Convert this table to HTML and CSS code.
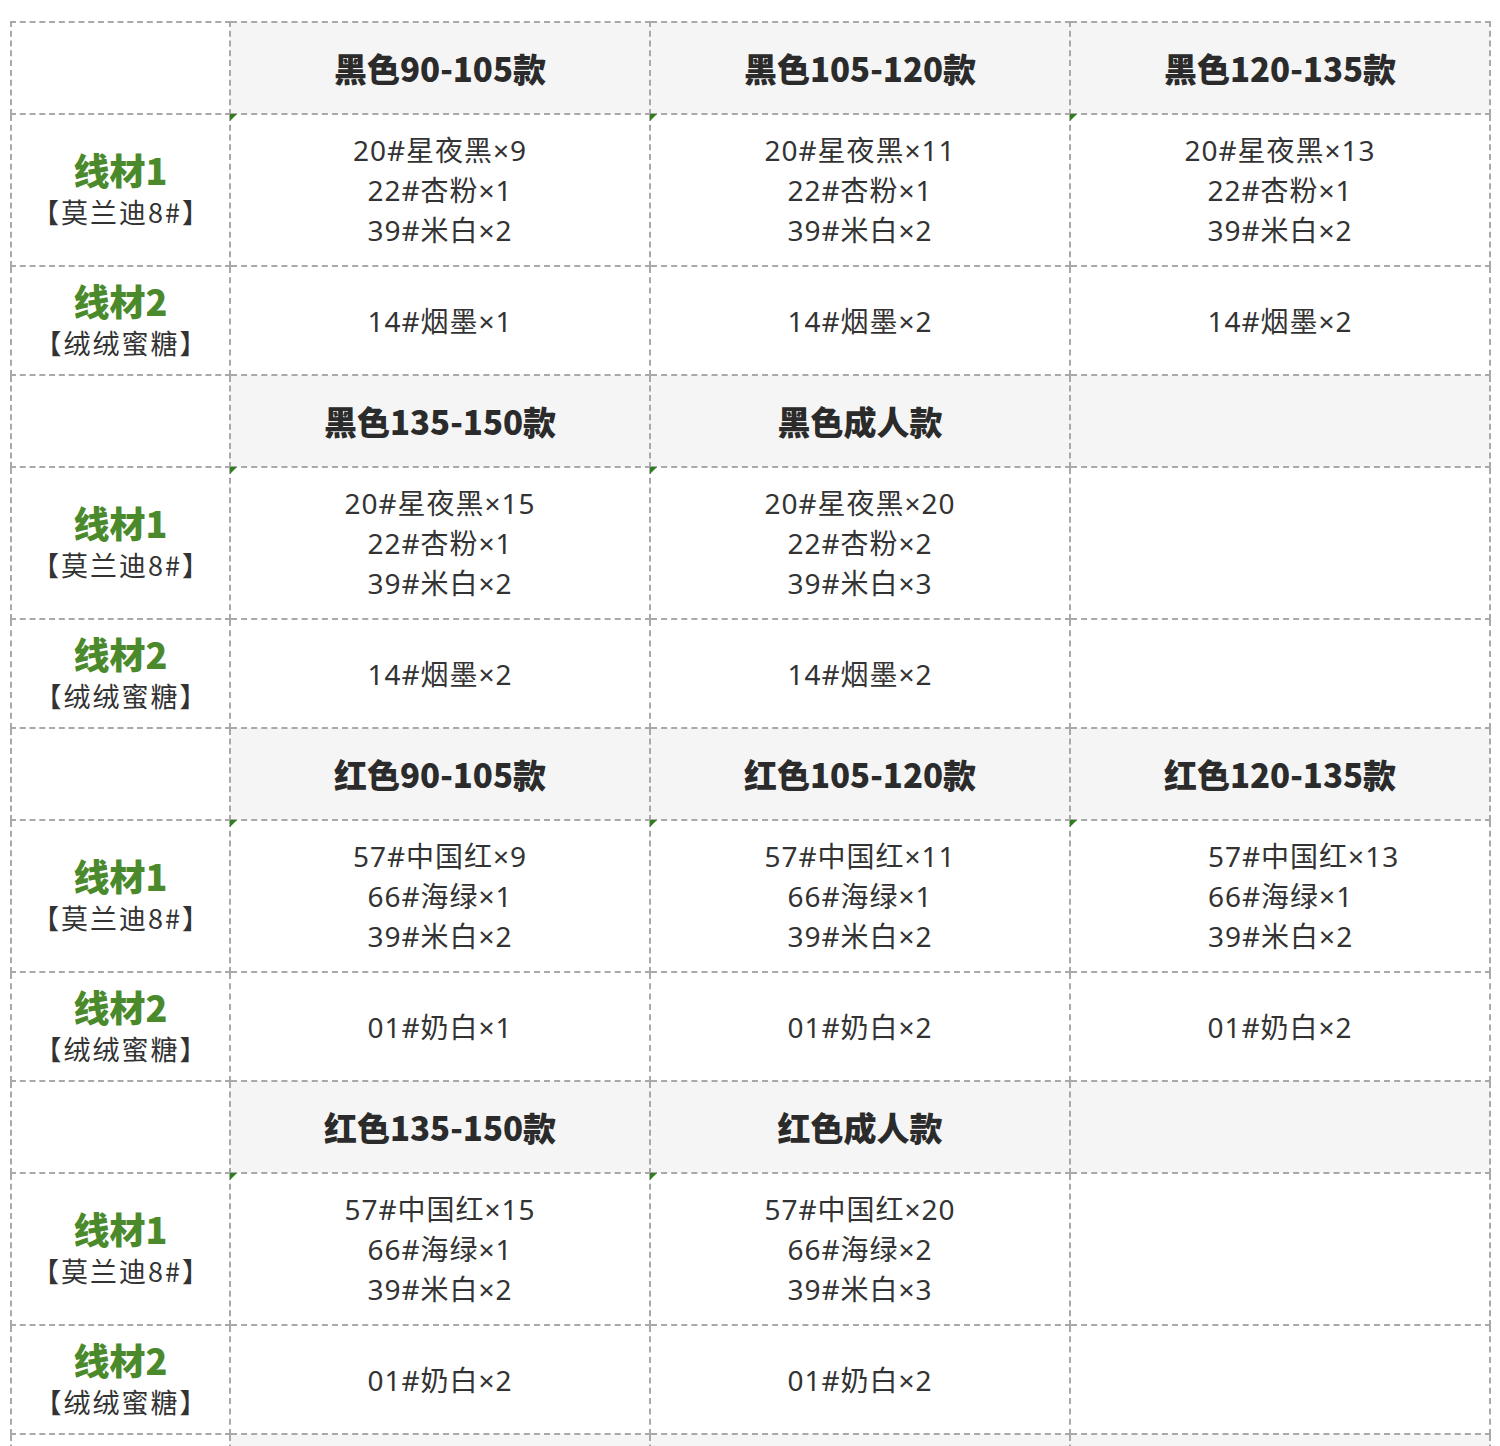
FILE: index.html
```html
<!DOCTYPE html>
<html lang="zh">
<head>
<meta charset="utf-8">
<title>线材表</title>
<link rel="stylesheet" href="styles.css">
</head>
<body>
<table class="grid">
  <colgroup><col class="c-label"><col class="c-data"><col class="c-data"><col class="c-data"></colgroup>
  <tbody>
    <tr class="r-head"><td class="blank"></td><td class="head">黑色90-105款</td><td class="head">黑色105-120款</td><td class="head">黑色120-135款</td></tr>
    <tr class="r-one">
      <td class="label"><div class="lab-main">线材1</div><div class="lab-sub">【莫兰迪8#】</div></td>
      <td class="data mark">20#星夜黑×9<br>22#杏粉×1<br>39#米白×2</td>
      <td class="data mark">20#星夜黑×11<br>22#杏粉×1<br>39#米白×2</td>
      <td class="data mark">20#星夜黑×13<br>22#杏粉×1<br>39#米白×2</td>
    </tr>
    <tr class="r-two">
      <td class="label"><div class="lab-main">线材2</div><div class="lab-sub">【绒绒蜜糖】</div></td>
      <td class="data">14#烟墨×1</td><td class="data">14#烟墨×2</td><td class="data">14#烟墨×2</td>
    </tr>

    <tr class="r-head"><td class="blank"></td><td class="head">黑色135-150款</td><td class="head">黑色成人款</td><td class="head"></td></tr>
    <tr class="r-one">
      <td class="label"><div class="lab-main">线材1</div><div class="lab-sub">【莫兰迪8#】</div></td>
      <td class="data mark">20#星夜黑×15<br>22#杏粉×1<br>39#米白×2</td>
      <td class="data mark">20#星夜黑×20<br>22#杏粉×2<br>39#米白×3</td>
      <td class="data"></td>
    </tr>
    <tr class="r-two">
      <td class="label"><div class="lab-main">线材2</div><div class="lab-sub">【绒绒蜜糖】</div></td>
      <td class="data">14#烟墨×2</td><td class="data">14#烟墨×2</td><td class="data"></td>
    </tr>

    <tr class="r-head"><td class="blank"></td><td class="head">红色90-105款</td><td class="head">红色105-120款</td><td class="head">红色120-135款</td></tr>
    <tr class="r-one">
      <td class="label"><div class="lab-main">线材1</div><div class="lab-sub">【莫兰迪8#】</div></td>
      <td class="data mark">57#中国红×9<br>66#海绿×1<br>39#米白×2</td>
      <td class="data mark">57#中国红×11<br>66#海绿×1<br>39#米白×2</td>
      <td class="data mark left">57#中国红×13<br>66#海绿×1<br>39#米白×2</td>
    </tr>
    <tr class="r-two">
      <td class="label"><div class="lab-main">线材2</div><div class="lab-sub">【绒绒蜜糖】</div></td>
      <td class="data">01#奶白×1</td><td class="data">01#奶白×2</td><td class="data">01#奶白×2</td>
    </tr>

    <tr class="r-head"><td class="blank"></td><td class="head">红色135-150款</td><td class="head">红色成人款</td><td class="head"></td></tr>
    <tr class="r-one">
      <td class="label"><div class="lab-main">线材1</div><div class="lab-sub">【莫兰迪8#】</div></td>
      <td class="data mark">57#中国红×15<br>66#海绿×1<br>39#米白×2</td>
      <td class="data mark">57#中国红×20<br>66#海绿×2<br>39#米白×3</td>
      <td class="data"></td>
    </tr>
    <tr class="r-two">
      <td class="label"><div class="lab-main">线材2</div><div class="lab-sub">【绒绒蜜糖】</div></td>
      <td class="data">01#奶白×2</td><td class="data">01#奶白×2</td><td class="data"></td>
    </tr>

    <tr class="r-head"><td class="blank"></td><td class="head"></td><td class="head"></td><td class="head"></td></tr>
  </tbody>
</table>
</body>
</html>
```
FILE: styles.css
```css
html, body {
  margin: 0;
  padding: 0;
  background: #ffffff;
}
body {
  padding: 21px 0 0 10px;
  font-family: "Noto Sans CJK SC", "Noto Sans", sans-serif;
  color: #333333;
  overflow: hidden;
}
.grid {
  border-collapse: collapse;
  table-layout: fixed;
  width: 1481px;
}
.c-label { width: 219px; }
.c-data { width: 420px; }
.grid td {
  border: 2px dashed #a9a9a9;
  padding: 0;
  text-align: center;
  vertical-align: middle;
}
.r-head td { height: 90px; }
.r-one td { height: 150px; }
.r-two td { height: 107px; }
.head {
  background: #f5f5f5;
  font-size: 33px;
  font-weight: 900;
  color: #2b2b2b;
}
.blank { background: #ffffff; }
.label { line-height: 1; }
.lab-main {
  font-size: 36px;
  font-weight: 900;
  color: #4b8a2c;
  line-height: 42px;
}
.lab-sub {
  font-size: 27px;
  font-weight: 400;
  color: #333333;
  line-height: 40px;
  letter-spacing: 2px;
  margin-top: 2px;
  margin-left: 2px;
}
.data {
  font-family: "Noto Sans", "Noto Sans CJK SC", sans-serif;
  font-size: 28px;
  line-height: 40px;
  font-weight: 400;
  color: #333333;
  position: relative;
  letter-spacing: 1px;
}
.data.left {
  text-align: left;
  padding-left: 137px;
}
.mark::before {
  content: "";
  position: absolute;
  left: -1px;
  top: -1px;
  width: 0;
  height: 0;
  border-top: 7px solid #2f7d1f;
  border-right: 7px solid transparent;
}
```
